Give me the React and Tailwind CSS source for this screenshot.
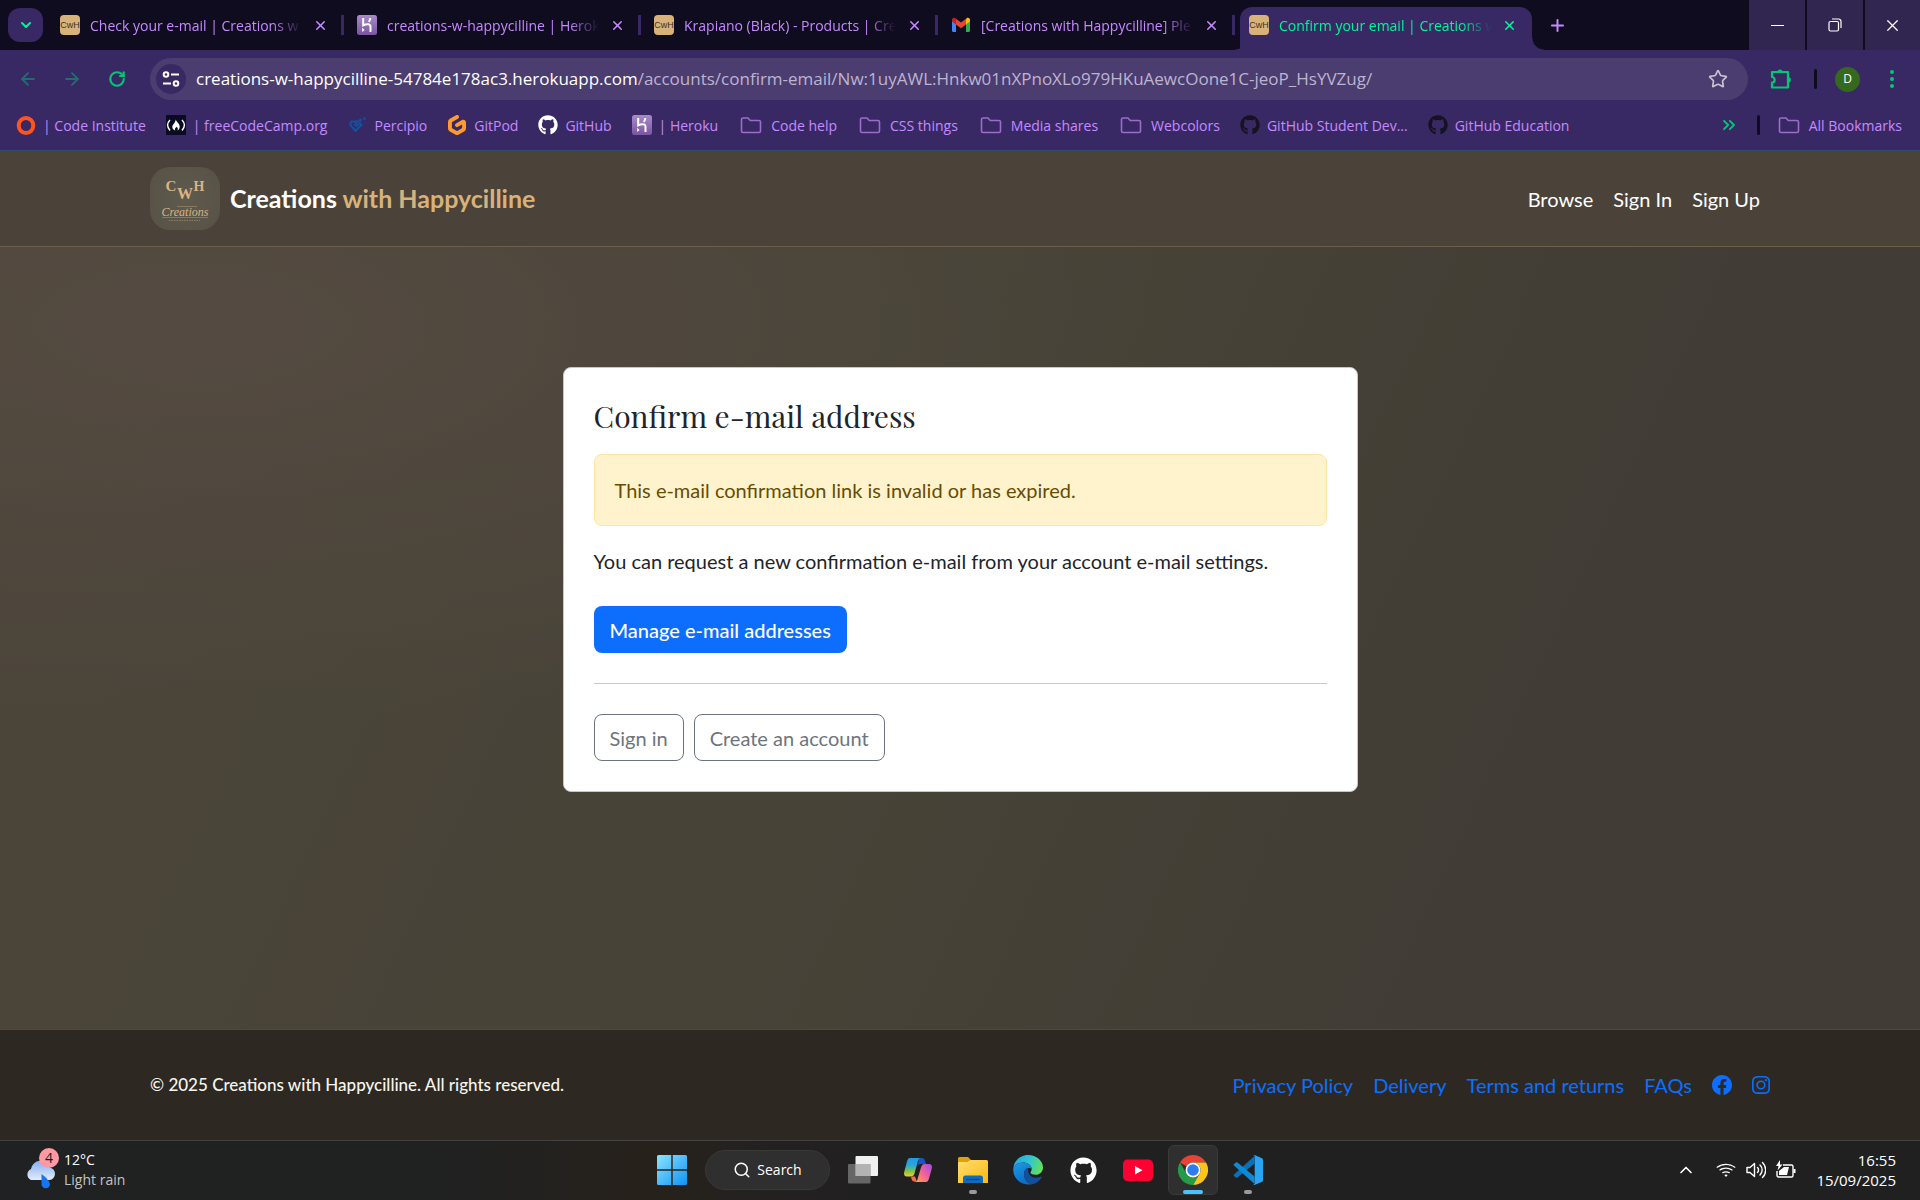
import React from "react";
import { FaGithub } from "react-icons/fa";
import { BsFacebook, BsInstagram, BsWifi } from "react-icons/bs";
import { SiGitpod } from "react-icons/si";
import { ArrowLeft, ArrowRight, ChevronDown, ChevronUp, ChevronsRight, Plus, RotateCw, Search, Star, X } from "lucide-react";

function CwhIcon() {
  return (
    <span className="flex size-5 shrink-0 items-center justify-center rounded-sm bg-[#d9b27a] font-['Liberation_Sans',sans-serif] text-[9px] leading-none text-[#3a3226]">
      CwH
    </span>
  );
}

function HerokuIcon() {
  return (
    <svg viewBox="0 0 20 20" className="size-5 shrink-0">
      <defs>
        <linearGradient id="heroku" x1="0" y1="0" x2="0" y2="1">
          <stop offset="0" stopColor="#a98acb" />
          <stop offset="1" stopColor="#7a55a0" />
        </linearGradient>
      </defs>
      <rect width="20" height="20" rx="2.5" fill="url(#heroku)" />
      <path d="M6.200 3v7.400c2.700-1.300 7.300-2 7.300 1.200V17M13.300 3c0 1.600-.5 2.700-1.500 3.900" fill="none" stroke="#fff" strokeWidth="2" />
      <path d="M5.200 12.800l2.400 2.100-2.400 2.100z" fill="#fff" />
    </svg>
  );
}

function GmailIcon() {
  return (
    <svg viewBox="0 0 20 20" className="size-5 shrink-0">
      <path d="M1 5.500v10A1.500 1.500 0 0 0 2.500 17H5V8z" fill="#4285f4" />
      <path d="M15 8v9h2.500a1.500 1.500 0 0 0 1.500-1.500v-10z" fill="#34a853" />
      <path d="M15 4.500V9.500l4-3V5c0-2-2.200-2.800-3.500-1.800z" fill="#fbbc04" />
      <path d="M1 5v1.500l4 3v-5l-.5-1.300C3.200 2.200 1 3 1 5z" fill="#c5221f" />
      <path d="M5 9.500v-5.800l5 3.800 5-3.800v5.800l-5 3.800z" fill="#ea4335" />
    </svg>
  );
}

function FolderIcon() {
  return (
    <svg viewBox="0 0 22 20" className="mx-0.5 h-5 w-[22px] shrink-0">
      <path d="M1.500 4.500a1.500 1.500 0 0 1 1.500-1.500h5l2.200 2.500H19a1.500 1.500 0 0 1 1.500 1.500v9A1.500 1.500 0 0 1 19 17.500H3A1.500 1.500 0 0 1 1.500 16z" fill="none" stroke="#9c6ccb" strokeWidth="1.600" />
    </svg>
  );
}

function CodeInstituteIcon() {
  return (
    <svg viewBox="0 0 20 20" className="size-5 shrink-0">
      <ellipse cx="10" cy="10.500" rx="7.300" ry="7.500" fill="none" stroke="#ff5420" strokeWidth="4" />
    </svg>
  );
}

function FreeCodeCampIcon() {
  return (
    <svg viewBox="0 0 20 20" className="size-5 shrink-0">
      <rect width="20" height="20" fill="#0a0a23" />
      <path d="M4 5C1 8 1 12 4 15.500M16 5c3 3 3 7 0 10.500" fill="none" stroke="#fff" strokeWidth="1.400" />
      <path d="M9.700 4.500c.6 2.200 4 4 4 7.200 0 2-1 3.200-2.500 3.800 1.300-1.600.6-3-.8-3.800-.3 1-1.500 1.500-1.500 2.600 0 .5.300.9.600 1.200-2-.4-3.200-1.800-3.200-3.500C6.300 9.500 9.500 8 9.700 4.500z" fill="#fff" />
    </svg>
  );
}

function PercipioIcon() {
  return (
    <svg viewBox="0 0 20 20" className="size-5 shrink-0" fill="none" stroke="#14509c">
      <path d="M4.500 6.500h6L7.800 9.500l1.700 1.700 3.300-3.300L14.500 10 8.500 16 3 9.500z" strokeWidth="2" />
      <path d="M12 6.500l2.300-2.300M16.500 4.500l1.700-1.700" strokeWidth="2.600" />
    </svg>
  );
}

const tabs = [
  { icon: <CwhIcon />, title: "Check your e-mail | Creations w" },
  { icon: <HerokuIcon />, title: "creations-w-happycilline | Herok" },
  { icon: <CwhIcon />, title: "Krapiano (Black) - Products | Cre" },
  { icon: <GmailIcon />, title: "[Creations with Happycilline] Ple" },
];

function TabTitle({ children }) {
  return (
    <span className="ml-2.5 w-[212px] overflow-hidden whitespace-nowrap [mask-image:linear-gradient(to_right,#000_86%,transparent_100%)]">
      {children}
    </span>
  );
}

function TabStrip() {
  return (
    <div className="flex h-[50px] bg-[#100c1f] text-[14px] text-[#c589ff]">
      <button aria-label="Search tabs" className="mt-2 ml-2 flex h-[34px] w-[35px] shrink-0 items-center justify-center rounded-xl bg-[#382964] text-[#00f59b]">
        <ChevronDown size={16} strokeWidth={3} />
      </button>
      <div className="flex pl-1">
        {tabs.map((t) => (
          <div key={t.title} className="flex w-[297px] items-center pl-[13px]">
            {t.icon}
            <TabTitle>{t.title}</TabTitle>
            <button aria-label="Close tab" className="ml-[11px]">
              <X size={15} strokeWidth={2.500} />
            </button>
            <span className="ml-auto h-5 w-[3px] bg-[#382964]" />
          </div>
        ))}
      </div>
      <div className="flex items-end">
        <span className="h-3 w-[5px] bg-[radial-gradient(circle_at_0_0,transparent_11px,#382964_12px)]" />
        <div className="flex h-[43px] w-[292px] items-center rounded-t-xl bg-[#382964] pb-[7px] pl-[9px] text-[#00f59b]">
          <CwhIcon />
          <TabTitle>Confirm your email | Creations w</TabTitle>
          <button aria-label="Close current tab" className="ml-[11px]">
            <X size={15} strokeWidth={2.500} />
          </button>
        </div>
        <span className="h-3 w-3 bg-[radial-gradient(circle_at_100%_0,transparent_11px,#382964_12px)]" />
      </div>
      <button aria-label="New tab" className="ml-1">
        <Plus size={19} strokeWidth={2.500} />
      </button>
      <div className="ml-auto flex gap-0.5 text-white">
        <button aria-label="Minimize" className="flex w-14 items-center justify-center bg-[#30264f]">
          <span className="h-px w-[13px] bg-white" />
        </button>
        <button aria-label="Restore" className="flex w-14 items-center justify-center bg-[#30264f]">
          <svg viewBox="0 0 14 14" className="size-3.5" fill="none" stroke="#fff" strokeWidth="1.200">
            <rect x="1" y="3.500" width="9.500" height="9.500" rx="1.500" />
            <path d="M4 1h6.500A2.500 2.500 0 0 1 13 3.500V10" />
          </svg>
        </button>
        <button aria-label="Close window" className="flex w-[55px] items-center justify-center bg-[#30264f]">
          <X size={19} strokeWidth={1.500} />
        </button>
      </div>
    </div>
  );
}

function Toolbar() {
  return (
    <div className="flex h-[58px] items-center">
      <button aria-label="Back" className="ml-[18px] text-[#226d72]">
        <ArrowLeft size={20} strokeWidth={2.200} />
      </button>
      <button aria-label="Forward" className="ml-6 text-[#226d72]">
        <ArrowRight size={20} strokeWidth={2.200} />
      </button>
      <button aria-label="Reload" className="ml-[26px] text-[#00c874]">
        <RotateCw size={18} strokeWidth={2.800} />
      </button>
      <div className="ml-[24px] flex h-[42px] grow items-center rounded-full bg-[#4b3d70] pl-1.5">
        <button aria-label="Site information" className="flex size-[30px] items-center justify-center rounded-full bg-[#382964]">
          <svg viewBox="0 0 18 18" className="size-[18px]" fill="none" stroke="#fff" strokeWidth="2">
            <circle cx="4" cy="4.500" r="2.300" />
            <path d="M9 4.500h8M1 13.500h8" />
            <circle cx="14" cy="13.500" r="2.300" />
          </svg>
        </button>
        <div role="textbox" aria-label="Address" className="ml-2.5 grow text-[17px] whitespace-nowrap text-[#bdb4d0]">
          <span className="text-white">creations-w-happycilline-54784e178ac3.herokuapp.com</span>
          /accounts/confirm-email/Nw:1uyAWL:Hnkw01nXPnoXLo979HKuAewcOone1C-jeoP_HsYVZug/
        </div>
        <button aria-label="Bookmark this page" className="mr-5 text-[#c9c2cf]">
          <Star size={20} strokeWidth={2} />
        </button>
      </div>
      <button aria-label="Extensions" className="ml-[22px]">
        <svg viewBox="0 0 22 22" className="size-[22px]" fill="none" stroke="#00c874" strokeWidth="2.200" strokeLinejoin="round">
          <path d="M2 4h16v15.500H2v-5c3.500 0 3.500-5.500 0-5.500z" />
          <path d="M8.500 4a1.500 1.500 0 0 1 3 0M18 10a1.500 1.500 0 0 1 0 3.500" fill="#00c874" />
        </svg>
      </button>
      <span className="ml-[22px] h-5 w-[3px] rounded bg-[#100c1f]" />
      <button aria-label="Profile" className="ml-[18px] flex size-[25px] items-center justify-center rounded-full bg-[#34691e] text-xs text-white">D</button>
      <button aria-label="Menu" className="mr-[26px] ml-[30px] flex flex-col gap-[3px]">
        <span className="size-1 rounded-full bg-[#00c874]" />
        <span className="size-1 rounded-full bg-[#00c874]" />
        <span className="size-1 rounded-full bg-[#00c874]" />
      </button>
    </div>
  );
}

const bookmarks = [
  { icon: <CodeInstituteIcon />, label: "| Code Institute" },
  { icon: <FreeCodeCampIcon />, label: "| freeCodeCamp.org" },
  { icon: <PercipioIcon />, label: "Percipio" },
  { icon: <SiGitpod size={20} color="#ff9a2e" />, label: "GitPod" },
  { icon: <FaGithub size={20} color="#fff" />, label: "GitHub" },
  { icon: <HerokuIcon />, label: "| Heroku" },
  { icon: <FolderIcon />, label: "Code help" },
  { icon: <FolderIcon />, label: "CSS things" },
  { icon: <FolderIcon />, label: "Media shares" },
  { icon: <FolderIcon />, label: "Webcolors" },
  { icon: <FaGithub size={20} color="#151320" />, label: "GitHub Student Dev..." },
  { icon: <FaGithub size={20} color="#151320" />, label: "GitHub Education" },
];

function BookmarksBar() {
  return (
    <nav aria-label="Bookmarks" className="flex h-[42px] items-center pb-2 pl-4 text-[14px] whitespace-nowrap text-[#c589ff]">
      <div className="flex gap-5">
        {bookmarks.map((b) => (
          <a key={b.label} href="#" className="flex items-center gap-[7px]">
            {b.icon}
            {b.label}
          </a>
        ))}
      </div>
      <button aria-label="More bookmarks" className="ml-auto text-[#00c874]">
        <ChevronsRight size={20} strokeWidth={2.200} />
      </button>
      <span className="ml-[18px] h-5 w-[3px] rounded bg-[#100c1f]" />
      <a href="#" className="mr-[18px] ml-4 flex items-center gap-[7px]">
        <FolderIcon />
        All Bookmarks
      </a>
    </nav>
  );
}

function Logo() {
  return (
    <span className="flex h-[63px] w-[70px] items-center justify-center rounded-[20px] bg-[radial-gradient(circle,#5f5a4e,#585246)]">
      <svg viewBox="0 0 70 63" className="h-[63px] w-[70px]" fill="#d8b585">
        <g fontFamily="Liberation Serif, serif" fontWeight="bold" textAnchor="middle">
          <text x="21" y="24" fontSize="15">C</text>
          <text x="35" y="32" fontSize="16">W</text>
          <text x="49" y="24" fontSize="14">H</text>
        </g>
        <text x="35" y="49" fontSize="12" fontWeight="normal" fontFamily="Liberation Serif, serif" fontStyle="italic" textAnchor="middle">Creations</text>
        <path d="M12 50.500h46M27 39.500h20" stroke="#a89068" strokeWidth="0.600" />
        <path d="M19 53.500h31" stroke="#8f7f62" strokeWidth="1.200" strokeDasharray="1.500 1" />
      </svg>
    </span>
  );
}

function SiteHeader() {
  return (
    <header className="flex h-24 items-center justify-between border-b border-[#6e5f49] bg-[#4b4339] px-[150px]">
      <a href="#" className="flex items-center gap-2.5 text-[25px] font-bold text-white">
        <Logo />
        <span>
          Creations <span className="text-[#d9b27a]">with Happycilline</span>
        </span>
      </a>
      <nav className="flex gap-5 pr-2.5 text-[20px] text-white">
        <a href="#">Browse</a>
        <a href="#">Sign In</a>
        <a href="#">Sign Up</a>
      </nav>
    </header>
  );
}

function ConfirmCard() {
  return (
    <section className="mx-auto mt-[120px] w-[795px] rounded-lg border border-[#c9c7c3] bg-white p-[30px] text-[20px] leading-[30px] text-[#212529]">
      <h1 className="mb-5 font-['Playfair_Display','Liberation_Serif',serif] text-[30px] leading-9">Confirm e-mail address</h1>
      <div role="alert" className="rounded-lg border border-[#ffe69c] bg-[#fff3cd] p-5 text-[#664d03]">
        This e-mail confirmation link is invalid or has expired.
      </div>
      <p className="mt-5">You can request a new confirmation e-mail from your account e-mail settings.</p>
      <button className="mt-[30px] block h-[47px] rounded-lg bg-[#0d6efd] px-4 font-medium text-white">Manage e-mail addresses</button>
      <hr className="my-[30px] border-[#c7c8c9]" />
      <div className="flex gap-2.5 text-[#6c757d]">
        <button className="h-[47px] rounded-lg border border-[#6c757d] px-[15px]">Sign in</button>
        <button className="h-[47px] rounded-lg border border-[#6c757d] px-[15px]">Create an account</button>
      </div>
    </section>
  );
}

function SiteFooter() {
  return (
    <footer className="flex h-[111px] items-center justify-between border-t border-[#504839] bg-[#2d2922] px-[150px]">
      <p className="text-[17px] font-medium text-[#f8f5ee]">© 2025 Creations with Happycilline. All rights reserved.</p>
      <nav className="flex items-center gap-5 text-[20px] text-[#0d6efd]">
        <a href="#">Privacy Policy</a>
        <a href="#">Delivery</a>
        <a href="#">Terms and returns</a>
        <a href="#">FAQs</a>
        <a href="#" aria-label="Facebook"><BsFacebook size={20} /></a>
        <a href="#" aria-label="Instagram"><BsInstagram size={18} /></a>
      </nav>
    </footer>
  );
}

function WindowsIcon() {
  return (
    <svg viewBox="0 0 30 30" className="size-[30px]">
      <defs>
        <linearGradient id="win" x1="0" y1="0" x2="1" y2="1">
          <stop offset="0" stopColor="#8be4ff" />
          <stop offset="1" stopColor="#0f93f5" />
        </linearGradient>
      </defs>
      <path d="M1.500 0H14.300V14.300H0V1.500A1.500 1.500 0 0 1 1.500 0zM15.700 0H28.500A1.500 1.500 0 0 1 30 1.500V14.300H15.700zM0 15.700H14.300V30H1.500A1.500 1.500 0 0 1 0 28.500zM15.700 15.700H30V28.500A1.500 1.500 0 0 1 28.500 30H15.700z" fill="url(#win)" />
    </svg>
  );
}

function TaskViewIcon() {
  return (
    <svg viewBox="0 0 30 30" className="size-[30px]">
      <rect x="7.500" y="1" width="22.500" height="20" rx="1" fill="#f0f0f0" />
      <rect x="0" y="9" width="22.500" height="19.500" rx="1" fill="#7d7d7d" opacity="0.750" />
      <rect x="7.500" y="9" width="15" height="12" fill="#b3b3b3" />
    </svg>
  );
}

function CopilotIcon() {
  return (
    <svg viewBox="0 0 30 30" className="size-[30px]">
      <defs>
        <linearGradient id="copa" x1="0" y1="0" x2="0" y2="1">
          <stop offset="0" stopColor="#1f9bea" />
          <stop offset="0.400" stopColor="#2aa7d8" />
          <stop offset="0.700" stopColor="#7cc14c" />
          <stop offset="1" stopColor="#f3cf22" />
        </linearGradient>
        <linearGradient id="copb" x1="1" y1="0" x2="0" y2="1">
          <stop offset="0" stopColor="#9a4cf0" />
          <stop offset="0.500" stopColor="#f0619a" />
          <stop offset="1" stopColor="#ffa548" />
        </linearGradient>
      </defs>
      <path d="M16 3h3c2 0 2.500 1.500 3 3l1 3h-6l-2 1z" fill="#1a55c8" />
      <path d="M7 3h10c-1.500 1-2 2.500-2.500 4.500l-3 11c-.7 2.300-1.800 3-4 3H4c-2.500 0-3.500-2-2.800-4.500L4 6.500C4.700 4 5.500 3 7 3z" fill="url(#copa)" />
      <path d="M14 27l-3-.500c-2-.4-2.500-2-3-5h4z" fill="#f36f4f" />
      <path d="M23 27H12.500c1.500-1 2-2.500 2.500-4.500l3-10c.7-2.500 1.800-3.500 4-3.500h4c2.500 0 3.500 2 2.800 4.500L26 23.500c-.7 2.500-1.500 3.500-3 3.500z" fill="url(#copb)" />
    </svg>
  );
}

function ExplorerIcon() {
  return (
    <svg viewBox="0 0 30 30" className="size-[30px]">
      <defs>
        <linearGradient id="fold" x1="0" y1="0" x2="1" y2="1">
          <stop offset="0" stopColor="#ffdf70" />
          <stop offset="1" stopColor="#fcb80f" />
        </linearGradient>
      </defs>
      <path d="M0 3.500A1.500 1.500 0 0 1 1.500 2H10l3 3v5H0z" fill="#e0a008" />
      <path d="M0 7h9.500l3-2H28.500A1.500 1.500 0 0 1 30 6.500V28H0z" fill="url(#fold)" />
      <path d="M5 28v-5a2.500 2.500 0 0 1 2.500-2.500h15A2.500 2.500 0 0 1 25 23v5z" fill="#0f6cbd" />
      <path d="M9 24.500h12" stroke="#0a4a8a" strokeWidth="1.300" strokeLinecap="round" />
    </svg>
  );
}

function EdgeIcon() {
  return (
    <svg viewBox="0 0 30 30" className="size-[30px]">
      <defs>
        <linearGradient id="edga" x1="0" y1="0.200" x2="1" y2="0.500">
          <stop offset="0" stopColor="#2aa5e0" />
          <stop offset="0.500" stopColor="#30c3d8" />
          <stop offset="1" stopColor="#62e05a" />
        </linearGradient>
        <linearGradient id="edgb" x1="0" y1="0" x2="0.500" y2="1">
          <stop offset="0" stopColor="#1b9de2" />
          <stop offset="1" stopColor="#0c6cc8" />
        </linearGradient>
      </defs>
      <path d="M.3 13C1.200 5.500 7.500 0 15 0c8.500 0 15 6 15 12.500 0 4-3 7.300-7.500 7.300-3.500 0-5-1.300-5-2.300 0-.8 1.200-1.300 1.200-3.500C18.700 10 14 7.500 10 7.500 5 7.500 1.500 10 .3 13z" fill="url(#edga)" />
      <path d="M.2 14C.8 10 5 7.500 10 7.500c5 0 8.700 3 8.700 6.500-2-2-7.700-1-7.700 5 0 5.500 4 9.500 8 10C10 31.500 0 25 .2 14z" fill="url(#edgb)" />
      <path d="M11 19c0-3.500 2-5.700 4.500-6-1.800 5 2.500 10 8 9.700 2 0 3.500-.7 4.500-1.200.5-.2.900.2.600.7C26.500 26 23 28.800 19 29.200c-4-.7-8-4.700-8-10.200z" fill="#10509f" />
    </svg>
  );
}

function YouTubeIcon() {
  return (
    <svg viewBox="0 0 30 30" className="size-[30px]">
      <rect y="4.500" width="30" height="21.500" rx="4.500" fill="#ff0033" />
      <path d="M12 11l7.500 4.200-7.500 4.200z" fill="#fff" />
    </svg>
  );
}

function ChromeIcon() {
  return (
    <svg viewBox="0 0 30 30" className="size-[30px]">
      <path d="M15 0a15 15 0 0 1 13 7.500H15a7.500 7.500 0 0 0-6.500 3.750L2 7.500A15 15 0 0 1 15 0z" fill="#ea4335" />
      <path d="M28 7.500A15 15 0 0 1 15 30l6.500-11.250A7.500 7.500 0 0 0 15 7.500z" fill="#fcc31a" />
      <path d="M2 7.500l6.500 11.250A7.500 7.500 0 0 0 21.500 18.750L15 30A15 15 0 0 1 2 7.500z" fill="#259b48" />
      <circle cx="15" cy="15" r="7.500" fill="#fff" />
      <circle cx="15" cy="15" r="5.800" fill="#2f7cf0" />
    </svg>
  );
}

function VsCodeIcon() {
  return (
    <svg viewBox="0 0 30 30" className="size-[30px]">
      <path d="M1 19.500L21.500 1v7.500L4.500 22.500a1.300 1.300 0 0 1-1.700 0L1 21a1 1 0 0 1 0-1.500z" fill="#0a70b8" />
      <path d="M1 10.500L21.500 29v-7.500L4.500 7.500a1.300 1.300 0 0 0-1.700 0L1 9a1 1 0 0 0 0 1.500z" fill="#0c8ad6" />
      <path d="M21.500 0L29 3.200a1.800 1.800 0 0 1 1 1.600v20.400a1.800 1.800 0 0 1-1 1.600L21.500 30c-.8.200-1.500-.2-1.800-.5.800.4 2 0 2-1.200V1.700c0-1.200-1.200-1.600-2-1.200.3-.4 1-.7 1.800-.5z" fill="#27a5f2" />
    </svg>
  );
}

function TaskButton({ label, children, mark, active }) {
  return (
    <button
      aria-label={label}
      className={
        active
          ? "flex h-[50px] w-[50px] flex-col items-center rounded-md border border-[#3a3a3a] bg-[#2f2f2f] pt-[9px]"
          : "flex h-[50px] w-[50px] flex-col items-center pt-2.5"
      }
    >
      {children}
      {mark === "dot" && <span className="mt-[5px] h-1 w-2 rounded-full bg-[#9a9a9a]" />}
      {mark === "bar" && <span className="mt-[5px] h-1 w-5 rounded-full bg-[#4cc2ff]" />}
    </button>
  );
}

function WeatherIcon() {
  return (
    <svg viewBox="0 0 36 46" className="h-[46px] w-9 shrink-0">
      <defs>
        <linearGradient id="cloud" x1="0" y1="0" x2="0" y2="1">
          <stop offset="0" stopColor="#86aef0" />
          <stop offset="1" stopColor="#e2ecfb" />
        </linearGradient>
      </defs>
      <path d="M6 33a6 6 0 0 1 0-11 9.500 9.500 0 0 1 18.500-1.500A6.300 6.300 0 0 1 24.500 33z" fill="url(#cloud)" />
      <path d="M16.500 27c3 2 8.500 7 8.500 10.500a4.300 4.300 0 0 1-8.500 0z" fill="#1377f5" />
      <circle cx="24" cy="11" r="10" fill="#ff99a4" />
      <text x="24" y="16" fontSize="14" textAnchor="middle" fill="#1b1b1b">4</text>
    </svg>
  );
}

function Taskbar() {
  return (
    <div className="grid h-[60px] grid-cols-[1fr_auto_1fr] items-center border-t border-[#434343] bg-[linear-gradient(to_right,#202122,#212121_25%,#27211b_34%,#232120_40%,#202020_50%)] pb-px text-[14px] leading-5 text-white">
      <button className="flex items-center pl-[25px] text-left">
        <WeatherIcon />
        <span className="ml-[3px]">
          12°C
          <br />
          <span className="text-[#c4c4c4]">Light rain</span>
        </span>
      </button>
      <div className="flex items-center gap-[5px]">
        <TaskButton label="Start"><WindowsIcon /></TaskButton>
        <button className="mx-[3px] flex h-10 w-[125px] items-center justify-center gap-1.5 rounded-full border border-[#383838] bg-[#2f2f2f]">
          <Search size={18} />
          Search
        </button>
        <TaskButton label="Task view"><TaskViewIcon /></TaskButton>
        <TaskButton label="Copilot"><CopilotIcon /></TaskButton>
        <TaskButton label="File Explorer" mark="dot"><ExplorerIcon /></TaskButton>
        <TaskButton label="Edge"><EdgeIcon /></TaskButton>
        <TaskButton label="GitHub Desktop">
          <span className="flex size-[30px] items-center justify-center"><FaGithub size={27} /></span>
        </TaskButton>
        <TaskButton label="YouTube"><YouTubeIcon /></TaskButton>
        <TaskButton label="Chrome" mark="bar" active><ChromeIcon /></TaskButton>
        <TaskButton label="Visual Studio Code" mark="dot"><VsCodeIcon /></TaskButton>
      </div>
      <div className="flex items-center justify-end pr-6">
        <button aria-label="Show hidden icons"><ChevronUp size={20} /></button>
        <button aria-label="Network, volume and battery" className="ml-5 flex items-center gap-2.5">
          <BsWifi size={20} />
          <svg viewBox="0 0 20 20" className="size-5" fill="none" stroke="#fff" strokeWidth="1.400" strokeLinecap="round" strokeLinejoin="round">
            <path d="M1 7.500v5h3l4.500 4v-13L4 7.500zM11.500 7.500a3.500 3.500 0 0 1 0 5M14 5a7 7 0 0 1 0 10M16.500 2.500a10.500 10.500 0 0 1 0 15" />
          </svg>
          <svg viewBox="0 0 20 20" className="size-5">
            <path d="M7 5h8.500A1.500 1.500 0 0 1 17 6.500v9a1.500 1.500 0 0 1-1.500 1.500h-13A1.500 1.500 0 0 1 1 15.500V11" fill="none" stroke="#fff" strokeWidth="1.400" />
            <path d="M17.500 9h2v4h-2zM3 15v-4l5-4h5l-2 8z" fill="#fff" />
            <path d="M4 0L0 6h2.500L1.500 10.500 6.500 4.500H4z" fill="#fff" />
          </svg>
        </button>
        <div className="ml-5 text-right text-[15px]">
          16:55
          <br />
          15/09/2025
        </div>
      </div>
    </div>
  );
}

export default function App() {
  return (
    <div className="flex min-h-screen flex-col bg-[#202020] font-['Open_Sans',sans-serif]">
      <div className="bg-[#382964]">
        <TabStrip />
        <Toolbar />
        <BookmarksBar />
      </div>
      <div className="flex grow flex-col border-t border-[#2a4f6e] font-['Lato',sans-serif]">
        <SiteHeader />
        <main className="grow bg-[radial-gradient(ellipse_at_10%_10%,#544a41,transparent_40%),linear-gradient(115deg,#4c453a,#474337_48%,#413c35_78%,#423c36)]">
          <ConfirmCard />
        </main>
        <SiteFooter />
      </div>
      <Taskbar />
    </div>
  );
}
